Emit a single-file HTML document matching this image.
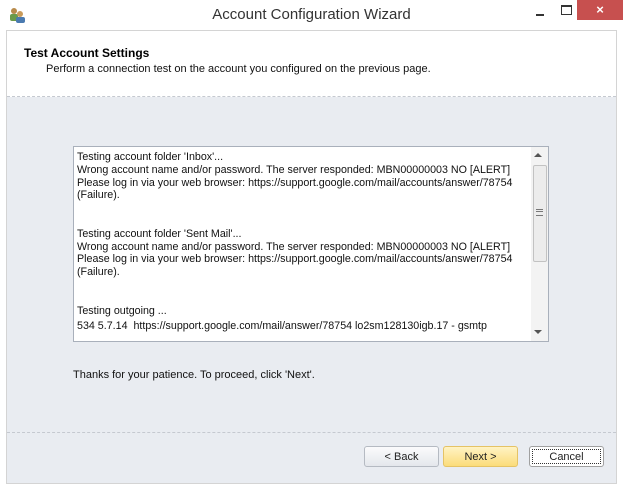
<!DOCTYPE html>
<html><head><style>
body{margin:0;width:623px;height:486px;background:#fff;font-family:"Liberation Sans",sans-serif;position:relative;overflow:hidden}
.abs{position:absolute}
.title{left:0;top:0;width:623px;height:30px;text-align:center;font-size:15px;line-height:30px;color:#333}
.frame{left:6px;top:30px;width:609px;height:452px;border:1px solid #d4d4d4;background:#e9ecf1}
.hdr{left:0;top:0;width:609px;height:65px;background:#fff;border-bottom:1px dashed #c5c9d0}
.btn{height:19px;border:1px solid #b5bac2;border-radius:3px;font-size:11px;text-align:center;line-height:20px;color:#222;background:linear-gradient(#fbfbfc,#e4e7ec)}
.box{left:73px;top:146px;width:474px;height:194px;border:1px solid #a9b0bb;background:#fff}
.txt{left:3px;top:4px;font-size:10.7px;line-height:12.8px;color:#111;white-space:pre}
</style></head><body>
<div class="abs title">Account Configuration Wizard</div>
<svg class="abs" style="left:8px;top:6px" width="18" height="18"><circle cx="6" cy="5" r="3" fill="#b88a4a"/><rect x="2" y="8" width="8" height="7" rx="2" fill="#6a9a4a"/><circle cx="12" cy="8" r="3" fill="#c89a5a"/><rect x="8" y="11" width="9" height="6" rx="2" fill="#4a7ab0"/></svg>
<div class="abs" style="left:536px;top:14px;width:8px;height:2px;background:#333"></div>
<div class="abs" style="left:561px;top:5px;width:9px;height:7px;border:1px solid #333;border-top-width:2px"></div>
<div class="abs" style="left:577px;top:0;width:46px;height:20px;background:#c7504f;color:#fff;text-align:center;font-size:13px;line-height:20px;font-weight:bold">×</div>
<div class="abs frame">
 <div class="abs hdr">
  <div class="abs" style="left:17px;top:15px;font-size:12px;font-weight:bold;color:#000">Test Account Settings</div>
  <div class="abs" style="left:39px;top:32px;font-size:11px;color:#111">Perform a connection test on the account you configured on the previous page.</div>
 </div>
 <div class="abs" style="left:0;top:401px;width:609px;border-top:1px dashed #c5c9d0"></div>
</div>
<div class="abs box">
<div class="abs txt">Testing account folder 'Inbox'...
Wrong account name and/or password. The server responded: MBN00000003 NO [ALERT]
Please log in via your web browser: https://support.google.com/mail/accounts/answer/78754
(Failure).


Testing account folder 'Sent Mail'...
Wrong account name and/or password. The server responded: MBN00000003 NO [ALERT]
Please log in via your web browser: https://support.google.com/mail/accounts/answer/78754
(Failure).


Testing outgoing ...
<span style="position:relative;top:3px">534 5.7.14  https://support.google.com/mail/answer/78754 lo2sm128130igb.17 - gsmtp</span></div>
<div class="abs" style="left:457px;top:0;width:17px;height:194px;background:#f3f3f3"></div>
<div class="abs" style="left:460px;top:6px;width:0;height:0;border:4px solid transparent;border-bottom:4px solid #555;border-top:0"></div>
<div class="abs" style="left:459px;top:18px;width:12px;height:95px;border:1px solid #c2c2c2;border-radius:2px;background:#ececec"></div>
<div class="abs" style="left:462px;top:62px;width:7px;height:5px;border-top:1px solid #777;border-bottom:1px solid #777"></div>
<div class="abs" style="left:462px;top:64px;width:7px;height:1px;background:#777"></div>
<div class="abs" style="left:460px;top:183px;width:0;height:0;border:4px solid transparent;border-top:4px solid #555;border-bottom:0"></div>
</div>
<div class="abs" style="left:73px;top:369px;font-size:11px;color:#111">Thanks for your patience.  To proceed, click 'Next'.</div>
<div class="abs btn" style="left:364px;top:446px;width:73px">&lt; Back</div>
<div class="abs btn" style="left:443px;top:446px;width:73px;border-color:#e5c365;background:linear-gradient(#fff3c4,#fbdc7a)">Next &gt;</div>
<div class="abs btn" style="left:529px;top:446px;width:73px;background:#fff;border-color:#a0a0a0"><div style="position:absolute;left:2px;top:2px;right:2px;bottom:2px;border:1px dotted #333;line-height:14px">Cancel</div></div>
</body></html>
